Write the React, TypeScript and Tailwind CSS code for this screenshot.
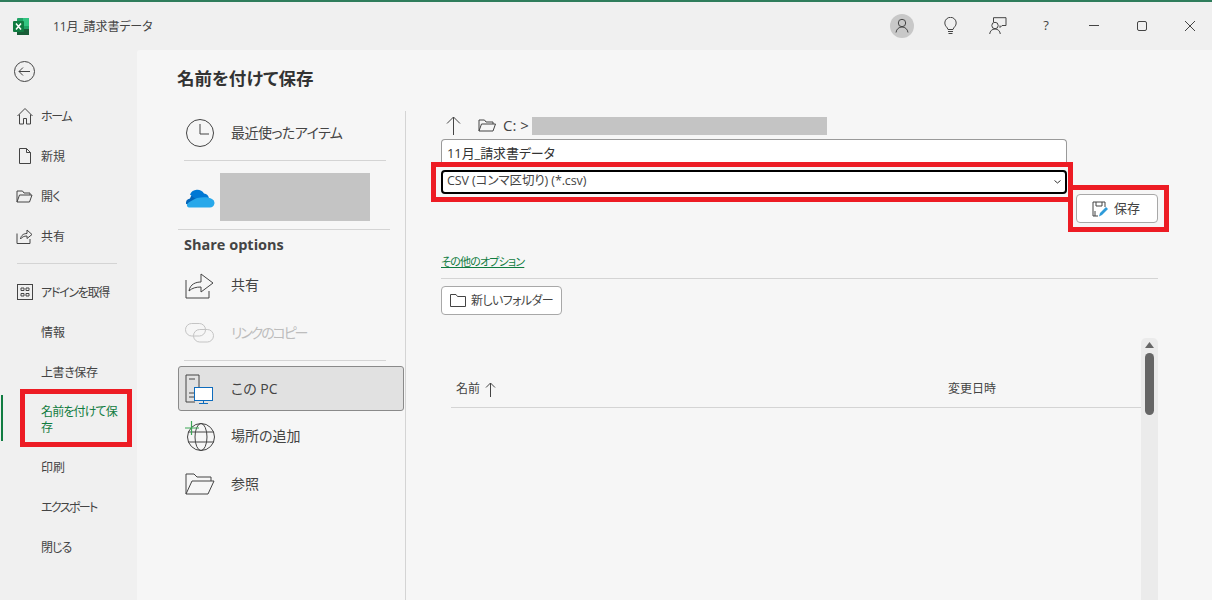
import React from "react";

const S = ({ w, h, children, className }: { w: number; h: number; children: React.ReactNode; className?: string }) => (
  <svg width={w} height={h} viewBox={`0 0 ${w} ${h}`} fill="none" stroke="#444" strokeWidth={1} className={className ?? "shrink-0"}>
    {children}
  </svg>
);

const Excel = () => (
  <svg width="17" height="17" viewBox="0 0 17 17" className="shrink-0">
    <rect x="4" y="0" width="12" height="17" rx="1" fill="#21a366" />
    <rect x="10" y="0" width="6" height="8" fill="#33c481" />
    <rect x="4" y="11" width="12" height="6" fill="#185c37" />
    <rect x="0" y="3" width="11" height="11" rx="1" fill="#107c41" />
    <path d="M3 5.500l5 6M8 5.500l-5 6" stroke="#fff" strokeWidth="1.500" />
  </svg>
);

const nav = {
  home: <S w={18} h={18}><path d="M1.500 9L9 1.500 16.500 9M3.500 7.500V17H7.500V11.500H10.500V17H14.500V7.500" /></S>,
  file: <S w={14} h={16}><path d="M1.500.5H8.500L12.500 4.500V15.500H1.500ZM8.500.5V4.500H12.500" /></S>,
  open: <S w={17} h={13}><path d="M1 12V1H6.500L8 3H14V5M1 12L3.500 5H16L13.500 12Z" /></S>,
  share: <S w={17} h={16}><path d="M1 5.500V15.500H14V11M4.500 11C5 7 8 5.500 11 5.500V2L16 6.500 11 10.500V8C8 8 6 9 4.500 11Z" /></S>,
  addin: <S w={16} h={16}><rect x=".5" y=".5" width="15" height="15" /><path d="M4 4h3v2.500H4zM9 4h3v2.500H9zM4 9.500h3V12H4zM9 9.500h3V12H9z" /></S>,
};

function NavRow({ icon, label, tracking }: { icon?: React.ReactNode; label: string; tracking?: string }) {
  return (
    <div className="flex h-10 items-center">
      <div className="flex w-[41px] shrink-0 items-center justify-center pl-[8px]">{icon}</div>
      <span className={`pt-[2px] text-[12px] text-[#444] ${tracking ?? ""}`}>{label}</span>
    </div>
  );
}

function PlaceRow({ icon, label, className, muted, tracking }: { icon: React.ReactNode; label: string; className?: string; muted?: boolean; tracking?: string }) {
  return (
    <div className={`flex h-11 items-center ${className ?? ""}`}>
      <div className="flex w-[53px] shrink-0 items-center justify-start pl-[7px]">{icon}</div>
      <span className={`-mt-[2px] text-[14px] ${muted ? "text-[#bdbdbd]" : "text-[#444]"} ${tracking ?? ""}`}>{label}</span>
    </div>
  );
}

export default function App() {
  return (
    <div className="relative flex h-[600px] w-[1212px] flex-col overflow-hidden bg-[#f0f0f0] font-['Open_Sans','Noto_Sans_CJK_JP',sans-serif] [font-feature-settings:'palt']">
      {/* window edge */}
      <div className="h-[2px] shrink-0 bg-[#2f7d5c]" />

      {/* title bar */}
      <div className="flex h-[48px] shrink-0 items-center">
        <div className="ml-[13px]"><Excel /></div>
        <span className="ml-[23px] mt-[2px] text-[12px] tracking-[-0.1px] text-[#444]">11月_請求書データ</span>
        <div className="ml-auto -mr-[2px] flex -mt-[1px]">
          <div className="flex h-8 w-12 items-center justify-center">
            <div className="flex h-6 w-6 items-center justify-center rounded-full bg-[#c8c8c8]">
              <S w={14} h={15}><circle cx="7" cy="5" r="3.700" /><path d="M1 14.500C1.500 11 4 9 7 9s5.500 2 6 5.500" /></S>
            </div>
          </div>
          <div className="flex h-8 w-12 items-center justify-center">
            <S w={13} h={18}><path d="M4 12.500C3.500 10 .8 9.500.8 6a5.700 5.700 0 0 1 11.400 0c0 3.500-2.700 4-3.200 6.500ZM4 14.500H9M4.500 16.500H8.500" /></S>
          </div>
          <div className="flex h-8 w-12 items-center justify-center">
            <S w={18} h={18}><path d="M4.500 5V.7H17V8.500H13L11 10.500V8.500" /><circle cx="6" cy="8.500" r="3.200" /><path d="M.7 17C1 14 3 12 6 12s5 2 5.300 5" /></S>
          </div>
          <div className="flex h-8 w-12 items-center justify-center text-[13px] text-[#444]">?</div>
          <div className="flex h-8 w-12 items-center justify-center">
            <S w={10} h={2}><path d="M0 .5H10" /></S>
          </div>
          <div className="flex h-8 w-12 items-center justify-center">
            <S w={10} h={10}><rect x=".5" y=".5" width="9" height="9" rx="1.500" /></S>
          </div>
          <div className="flex h-8 w-12 items-center justify-center">
            <S w={10} h={10}><path d="M0 0L10 10M10 0L0 10" /></S>
          </div>
        </div>
      </div>

      <div className="flex min-h-0 flex-1">
        {/* left nav */}
        <nav className="relative w-[137px] shrink-0">
          <div className="flex h-[46px] items-start pl-[14px] pt-[11px]">
            <S w={21} h={21}>
              <circle cx="10.500" cy="10.500" r="10" />
              <path d="M16 10.500H5M9 6.500L5 10.500 9 14.500" />
            </S>
          </div>
          <div>
            <NavRow icon={nav.home} label="ホーム" tracking="tracking-[-1.300px]" />
            <NavRow icon={nav.file} label="新規" />
            <NavRow icon={nav.open} label="開く" tracking="tracking-[-0.500px]" />
            <NavRow icon={nav.share} label="共有" />
          </div>
          <div className="mx-[17px] mt-[7px] h-px w-[100px] bg-[#d4d4d4]" />
          <div className="mt-[8px]">
            <NavRow icon={nav.addin} label="アドインを取得" tracking="tracking-[-1.300px]" />
            <NavRow label="情報" />
            <NavRow label="上書き保存" tracking="tracking-[-0.400px]" />
          </div>
          <div className="relative flex h-[55px] items-center pl-[41px] pr-[5px]">
            <div className="absolute left-[1px] top-[3px] h-[46px] w-[2px] bg-[#107c41]" />
            <span className="text-[12px] leading-[16px] tracking-[-0.850px] text-[#107c41]">名前を付けて保<br />存</span>
          </div>
          <NavRow label="印刷" />
          <NavRow label="エクスポート" tracking="tracking-[-1.600px]" />
          <NavRow label="閉じる" tracking="tracking-[-1px]" />
        </nav>

        {/* main panel */}
        <main className="flex min-w-0 flex-1 flex-col rounded-tl-[3px] bg-[#f6f6f6]">
          <div className="flex h-[61px] shrink-0 items-start pl-[40px] pt-[15px]">
            <h1 className="text-[17.500px] font-bold leading-[26px] text-[#333]">名前を付けて保存</h1>
          </div>

          <div className="flex min-h-0 flex-1">
            {/* places */}
            <div className="ml-[41px] w-[227px] shrink-0">
              <PlaceRow
                icon={<S w={30} h={30}><circle cx="15" cy="15" r="13.500" /><path d="M15 6V16H24" /></S>}
                label="最近使ったアイテム"
                tracking="tracking-[-0.550px]"
              />
              <div className="ml-[6px] mt-[5px] h-px w-[202px] bg-[#d4d4d4]" />
              <div className="mt-[12px] flex h-12 items-center pl-[7px]">
                <svg width="30" height="20" viewBox="0 0 30 20" className="mt-[3px] shrink-0">
                  <path d="M11 17L18 8a7 7 0 0 0-13 1.500A5 5 0 0 0 1 15Z" fill="#0364b8" />
                  <path d="M5 5.500a8 8 0 0 1 14-1 6 6 0 0 1 5 5H10Z" fill="#0078d4" />
                  <path d="M4 18.500h21a4.500 4.500 0 0 0 2-8.500C24 8 18 8 12 9 9 10 6 12 3 14c-2 2-1 4.500 1 4.500Z" fill="#28a8ea" />
                </svg>
                <div className="ml-[5px] h-12 w-[150px] bg-[#c4c4c4]" />
              </div>
              <div className="mt-[8px] h-px w-[212px] bg-[#d4d4d4]" />
              <div className="ml-[6px] mt-[5px] flex h-5 items-center text-[14.500px] font-bold text-[#444]">Share options</div>
              <PlaceRow
                className="mt-[8px]"
                icon={<S w={29} h={28}><path d="M1 9V27H24V20M4 20C5 13 11 11 16 11V3L28 12 16 21V16C11 16 7 17 4 20Z" /></S>}
                label="共有"
              />
              <PlaceRow
                className="mt-[4px]"
                muted
                tracking="tracking-[-2.100px]"
                icon={
                  <svg width="29" height="20" viewBox="0 0 29 20" fill="none" stroke="#c4c4c4" className="shrink-0">
                    <rect x=".5" y=".5" width="20" height="12.500" rx="6.200" />
                    <rect x="8.500" y="6.500" width="20" height="12.500" rx="6.200" />
                  </svg>
                }
                label="リンクのコピー"
              />
              <div className="ml-[6px] mt-[5px] h-px w-[202px] bg-[#d4d4d4]" />
              <div className="mt-[5px] flex h-[45px] w-[226px] items-center rounded-[3px] border border-[#8a8a8a] bg-[#e1e1e1]">
                <div className="w-[52px] shrink-0 pl-[6px]">
                  <svg width="29" height="30" viewBox="0 0 29 30" fill="none" className="shrink-0">
                    <path d="M10 28H1V1H14V13" stroke="#444" />
                    <path d="M4 5H10M4 19H9M4 23H9" stroke="#444" />
                    <rect x="9.500" y="13.500" width="18" height="13" fill="#fff" stroke="#0f6cbd" />
                    <path d="M18.500 26.500V29M14 29.500H23" stroke="#0f6cbd" />
                  </svg>
                </div>
                <span className="text-[14px] text-[#444]">この PC</span>
              </div>
              <PlaceRow
                className="mt-[3px]"
                icon={
                  <svg width="31" height="30" viewBox="0 0 31 30" fill="none" className="shrink-0">
                    <circle cx="16" cy="16" r="13.500" stroke="#444" />
                    <ellipse cx="16" cy="16" rx="6" ry="13.500" stroke="#444" />
                    <path d="M3 11H29M3 21H29" stroke="#444" />
                    <path d="M6.500 0V14M0 7H14" stroke="#3aa655" strokeWidth="1.200" />
                  </svg>
                }
                label="場所の追加"
              />
              <PlaceRow
                className="mt-[4px]"
                icon={<S w={30} h={22}><path d="M1 21V1H9L12 4H26V8M1 21L7 8H29L23 21Z" /></S>}
                label="参照"
              />
            </div>

            {/* vertical rule */}
            <div className="w-px shrink-0 bg-[#d4d4d4]" />

            {/* save form */}
            <div className="ml-[35px] flex w-[717px] shrink-0 flex-col">
              <div className="flex h-[28px] shrink-0 items-center pl-[5px]">
                <S w={15} h={19}><path d="M7.500 19V1M1 7.500L7.500 1 14 7.500" /></S>
                <div className="ml-[17px]"><S w={18} h={13}><path d="M1 12V1H6.500L8 3H15V5M1 12L3.500 5H17.500L15 12Z" /></S></div>
                <span className="ml-[7px] w-[29px] shrink-0 text-[15px] text-[#444]">C: &gt;</span>
                <div className="mt-[2px] h-[18px] w-[295px] bg-[#c4c4c4]" />
              </div>
              <div className="h-[28px] w-[626px] shrink-0 rounded-t-[4px] border border-b-0 border-[#9a9a9a] bg-white pl-[5px] text-[13px] leading-[26px] tracking-[-0.100px] text-[#333]">11月_請求書データ</div>
              <div className="mt-[3px] flex h-[24px] w-[626px] shrink-0 items-center justify-between rounded-[4px] border-2 border-black bg-white pl-[4px] pr-[4px] text-[12.500px] text-[#444]">
                <span className="-mt-[2px] tracking-[-0.100px]">CSV (コンマ区切り) (*.csv)</span>
                <svg width="7" height="4" viewBox="0 0 7 4" fill="none" stroke="#333"><path d="M.5.500L3.500 3 6.500.500" /></svg>
              </div>
              <div className="flex shrink-0 justify-end">
                <button className="flex h-[29px] w-[82px] items-center justify-center rounded-[4px] border border-[#a8a8a8] bg-white pr-[2px] text-[13px] text-[#444]">
                  <svg width="17" height="16" viewBox="0 0 17 16" fill="none" className="mr-[5px]">
                    <path d="M6 15H1V1H13V6" stroke="#444" />
                    <path d="M4 1V5H10V1M3 15V10" stroke="#444" />
                    <path d="M7 15.500L8 12 14 6 16 8 10 14Z" fill="#2f9bd9" />
                  </svg>
                  保存
                </button>
              </div>
              <a className="mt-[30px] w-fit text-[11px] leading-[18px] tracking-[-0.800px] text-[#107c41] underline">その他のオプション</a>
              <div className="mt-[7px] h-px w-full shrink-0 bg-[#d4d4d4]" />
              <button className="mt-[7px] flex h-[29px] w-[121px] shrink-0 items-center rounded-[4px] border border-[#a8a8a8] bg-white pl-[8px] text-[12px] text-[#444]">
                <S w={16} h={13}><path d="M.5 12.500V.5H6L7.500 2.500H15.500V12.500Z" /></S>
                <span className="ml-[5px] tracking-[-0.600px]">新しいフォルダー</span>
              </button>

              {/* file list */}
              <div className="mt-[23px] flex min-h-0 flex-1">
                <div className="min-w-0 flex-1 pl-[10px]">
                  <div className="mt-[33px] flex h-[37px] items-center border-b border-[#d4d4d4] text-[12px] text-[#444]">
                    <span className="ml-[5px]">名前</span>
                    <div className="ml-[5px]"><S w={11} h={15}><path d="M5.500 15V1M1 5.500L5.500 1 10 5.500" /></S></div>
                    <span className="ml-[452px]">変更日時</span>
                  </div>
                </div>
                <div className="flex w-[17px] shrink-0 flex-col items-center rounded-t-[5px] bg-[#ebebeb] pt-[4px]">
                  <svg width="9" height="6" viewBox="0 0 9 6" className="shrink-0"><path d="M4.500 0L9 6H0Z" fill="#666" /></svg>
                  <div className="mt-[5px] h-[62px] w-[9px] rounded-full bg-[#666]" />
                </div>
              </div>
            </div>
          </div>
        </main>
      </div>

      {/* red annotation frames */}
      <div className="pointer-events-none absolute left-[20px] top-[389px] h-[58px] w-[112px] border-[5px] border-[#ed1c24]" />
      <div className="pointer-events-none absolute left-[431px] top-[162px] h-[40px] w-[642px] border-[5px] border-[#ed1c24]" />
      <div className="pointer-events-none absolute left-[1068px] top-[185px] h-[47px] w-[101px] border-[5px] border-[#ed1c24]" />
    </div>
  );
}
